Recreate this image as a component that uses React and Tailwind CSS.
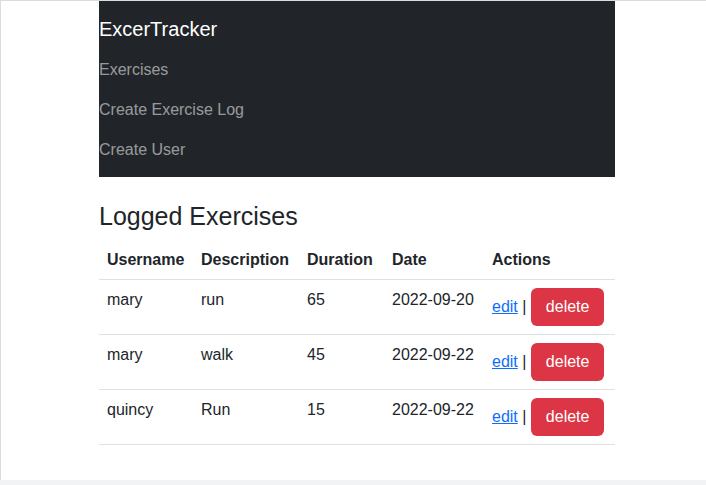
import React from 'react';

const exercises = [
  { username: 'mary', description: 'run', duration: 65, date: '2022-09-20' },
  { username: 'mary', description: 'walk', duration: 45, date: '2022-09-22' },
  { username: 'quincy', description: 'Run', duration: 15, date: '2022-09-22' },
];

function Navbar() {
  return (
    <nav className="bg-[#212529] py-2">
      <a href="#" className="block py-[5px] text-[20px] leading-[30px] text-white">ExcerTracker</a>
      <ul>
        <li><a href="#" className="block pt-[9px] pb-[7px] text-[rgba(255,255,255,0.55)]">Exercises</a></li>
        <li><a href="#" className="block pt-[9px] pb-[7px] text-[rgba(255,255,255,0.55)]">Create Exercise Log</a></li>
        <li><a href="#" className="block pt-[9px] pb-[7px] text-[rgba(255,255,255,0.55)]">Create User</a></li>
      </ul>
    </nav>
  );
}

function ExerciseRow({ ex }) {
  return (
    <tr className="border-b border-[#dee2e6]">
      <td className="p-2 align-top">{ex.username}</td>
      <td className="p-2 align-top">{ex.description}</td>
      <td className="p-2 align-top">{ex.duration}</td>
      <td className="p-2 align-top">{ex.date}</td>
      <td className="p-2 align-top">
        <a href="#" className="text-[#0d6efd] underline">edit</a> |{' '}
        <button className="rounded-[6px] bg-[#dc3545] px-[15px] py-[7px] text-white leading-6">delete</button>
      </td>
    </tr>
  );
}

export default function App() {
  return (
    <div className="min-h-screen bg-[#f1f3f4]" style={{ fontFamily: '"Liberation Sans", Arial, sans-serif' }}>
      <div className="h-[480px] bg-white border-l border-t border-[#dadce0] text-[#212529] text-base leading-6">
        <div className="w-[516px] ml-[98px]">
          <Navbar />
          <br />
          <h3 className="text-[25px] leading-[30px] font-medium mb-2">Logged Exercises</h3>
          <table className="w-full text-left border-collapse">
            <thead>
              <tr className="border-b border-[#dee2e6]">
                <th className="px-2 pt-[9px] pb-[7px] w-[94px] font-bold">Username</th>
                <th className="px-2 pt-[9px] pb-[7px] w-[106px] font-bold">Description</th>
                <th className="px-2 pt-[9px] pb-[7px] w-[85px] font-bold">Duration</th>
                <th className="px-2 pt-[9px] pb-[7px] w-[100px] font-bold">Date</th>
                <th className="px-2 pt-[9px] pb-[7px] font-bold">Actions</th>
              </tr>
            </thead>
            <tbody>
              {exercises.map((ex, i) => (
                <ExerciseRow key={i} ex={ex} />
              ))}
            </tbody>
          </table>
        </div>
      </div>
    </div>
  );
}
